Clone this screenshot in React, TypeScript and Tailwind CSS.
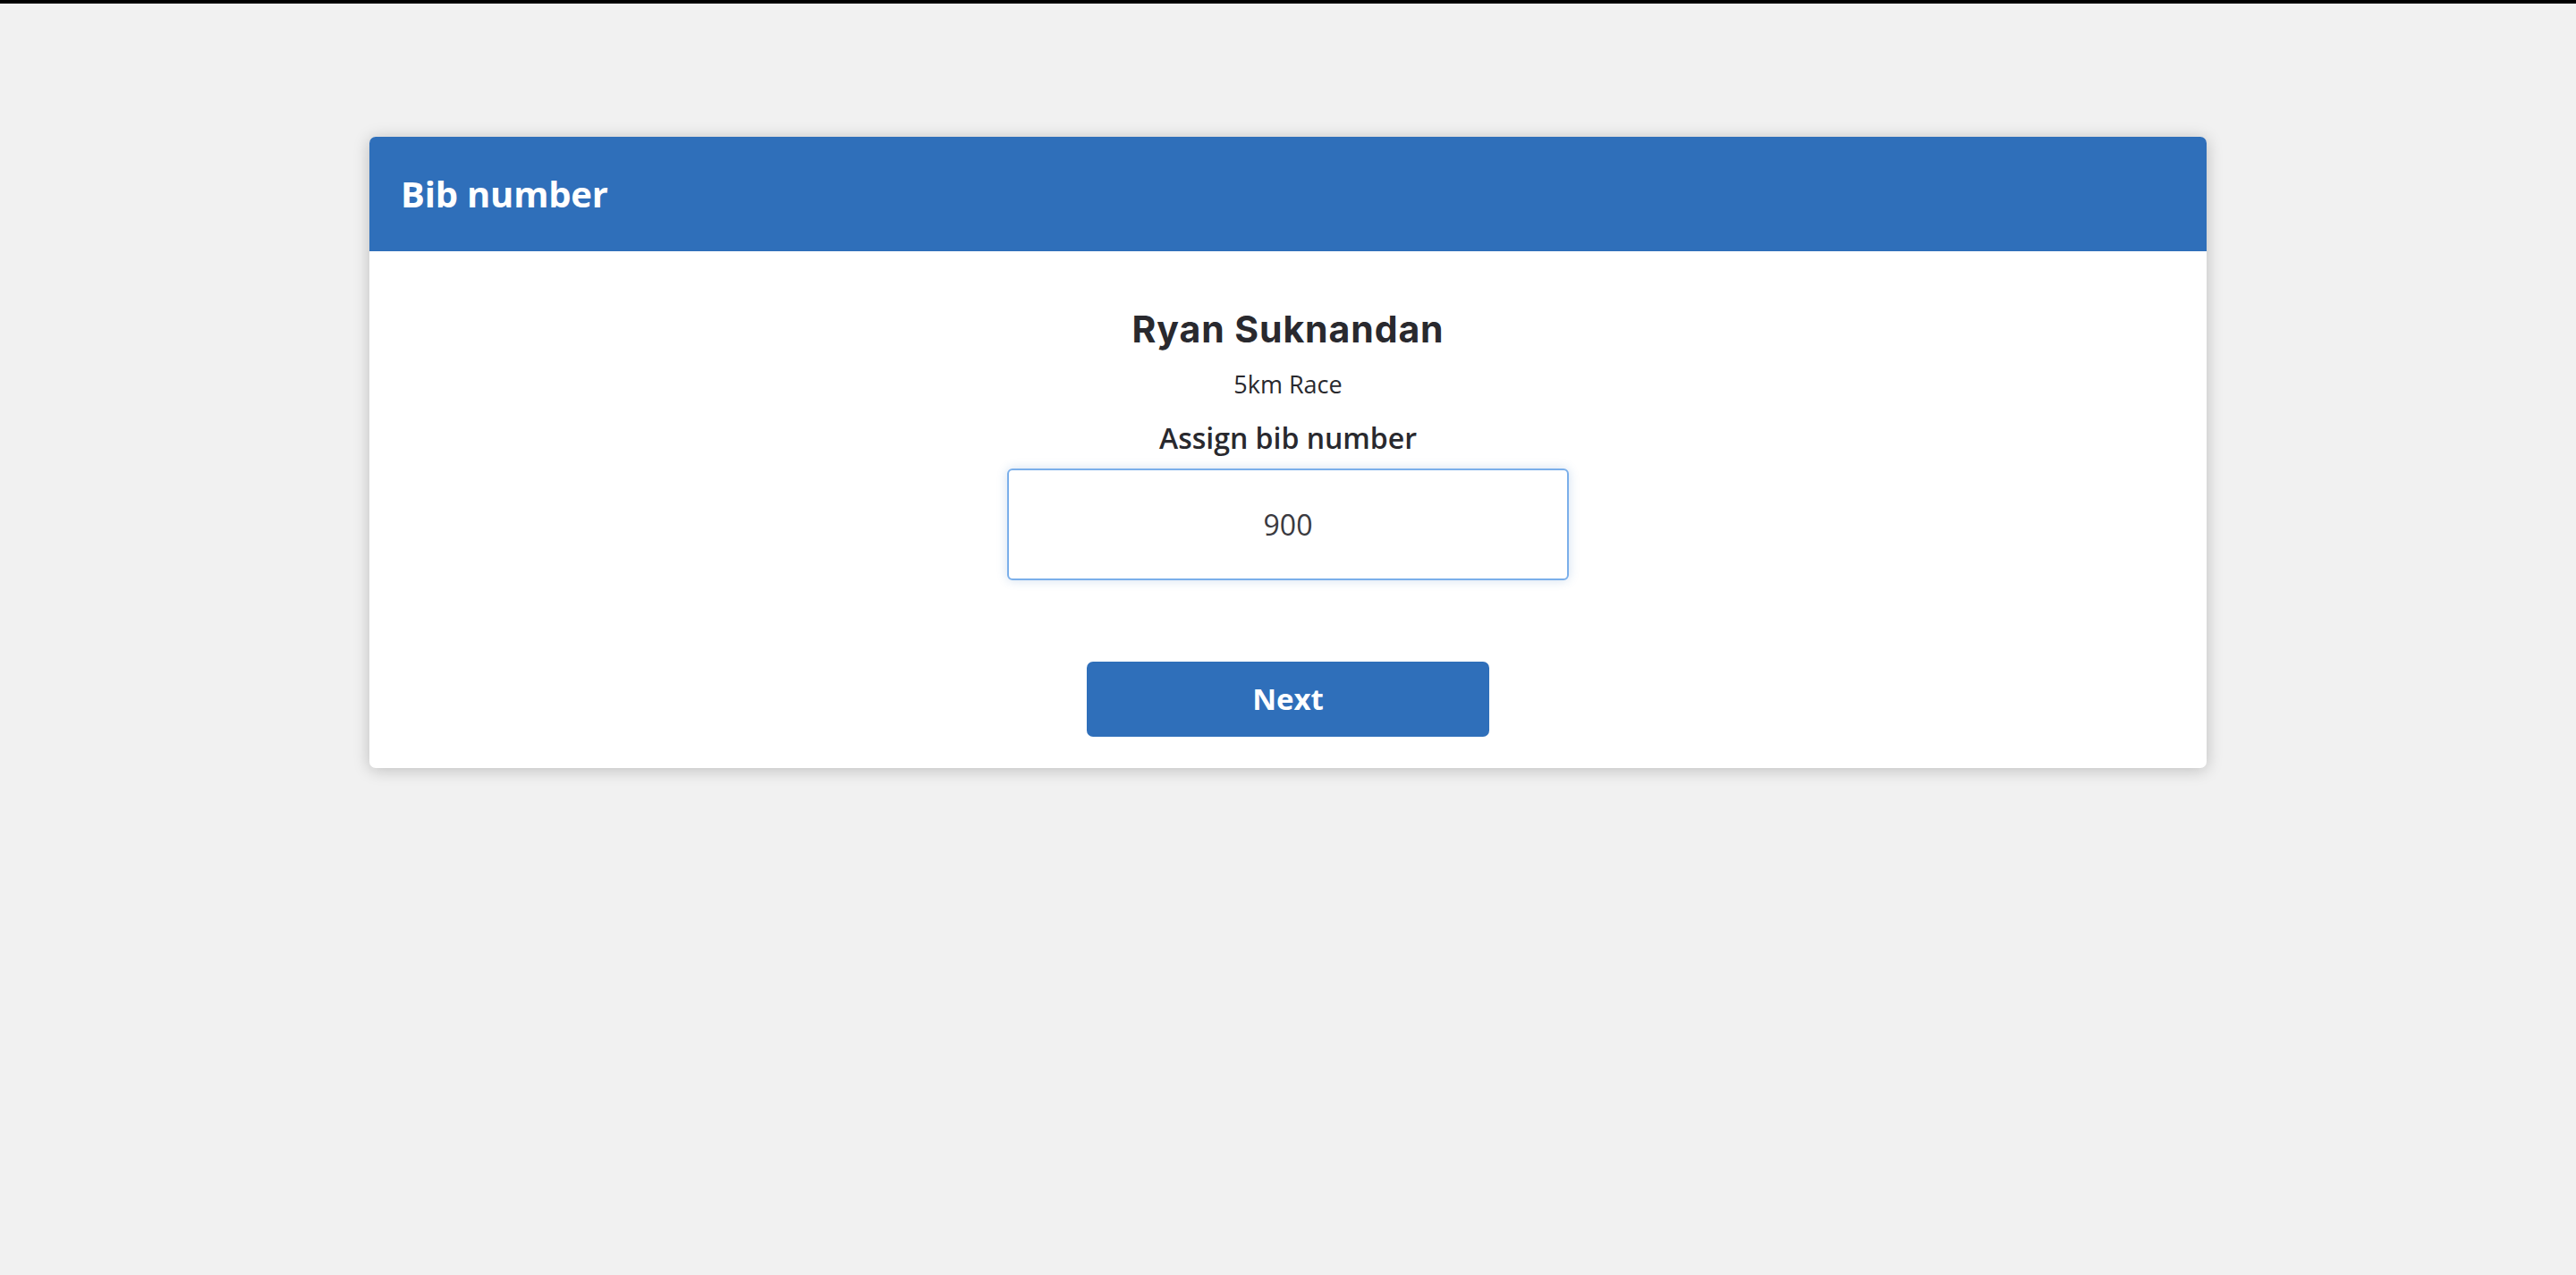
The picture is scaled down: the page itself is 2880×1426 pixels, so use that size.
export default function App() {
  return (
    <div className="min-h-screen bg-[#f1f1f1] flex flex-col" style={{ fontFamily: '"Open Sans", sans-serif' }}>
      {/* top bar */}
      <div className="h-[4px] bg-black flex-shrink-0" />

      <div className="pt-[149px] flex justify-center">
        <div className="w-[2054px] bg-white rounded-[7px] shadow-[0_2px_18px_rgba(0,0,0,0.22)] overflow-hidden">
          {/* header */}
          <div className="h-[128px] bg-[#2f6fba] flex items-center px-[35px]">
            <h1 className="text-white font-bold text-[40px] leading-none tracking-[-0.2px]">Bib number</h1>
          </div>

          {/* body */}
          <div className="flex flex-col items-center pt-[63px] pb-[35px] text-[#29292e]">
            <div
              className="font-bold text-[41px] leading-[48px] tracking-[0.9px]"
              style={{ fontFamily: '"Inter", sans-serif' }}
            >
              Ryan Suknandan
            </div>
            <div className="mt-[20px] text-[27px] leading-[36px]">5km Race</div>
            <div className="mt-[22px] font-semibold text-[32px] leading-[40px]">Assign bib number</div>
            <input
              className="mt-[14px] w-[628px] h-[125px] rounded-[6px] border-2 border-[#7bafea] bg-white text-center text-[32px] text-[#3a3a3f] outline-none shadow-[0_0_12px_rgba(47,111,186,0.22)]"
              defaultValue="900"
            />
            <button className="mt-[91px] w-[450px] h-[84px] rounded-[7px] bg-[#2f6fba] text-white font-bold text-[33px]">
              Next
            </button>
          </div>
        </div>
      </div>
    </div>
  );
}
